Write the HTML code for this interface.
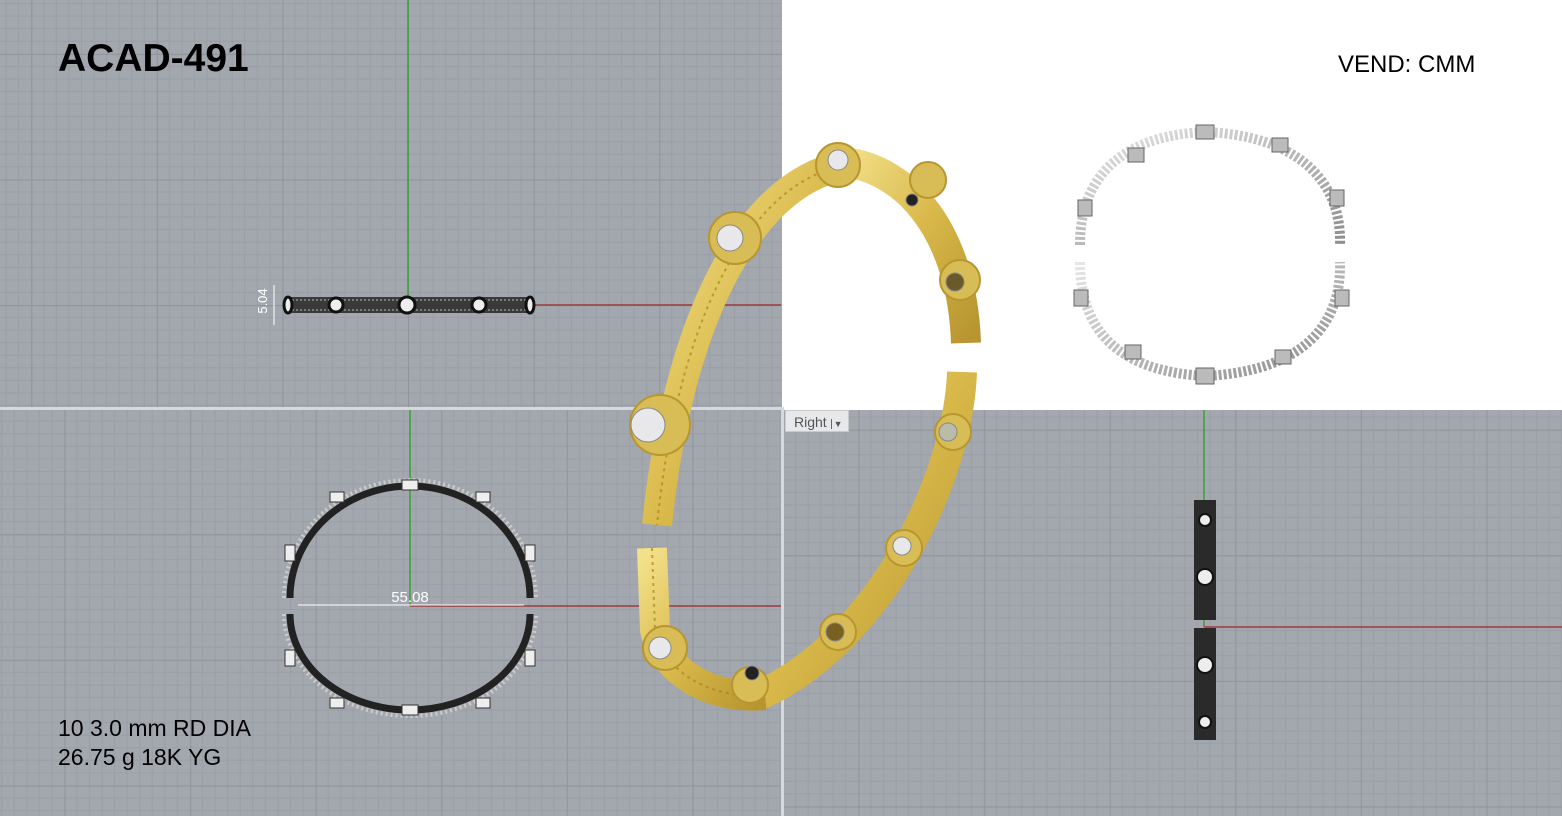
<!DOCTYPE html><html><head><style>
html,body{margin:0;padding:0;width:1562px;height:816px;overflow:hidden;background:#a3a7ae}
svg{position:absolute;left:0;top:0}
.t{position:absolute;font-family:"Liberation Sans",Arial,sans-serif;color:#000}
</style></head><body>
<svg width="1562" height="816" viewBox="0 0 1562 816">
<defs>
<pattern id="g1" x="408" y="305" width="125.6" height="125.6" patternUnits="userSpaceOnUse">
<rect width="125.6" height="125.6" fill="#a3a7ae"/>
<path d="M12.56 0V125.6M25.12 0V125.6M37.68 0V125.6M50.24 0V125.6M62.8 0V125.6M75.36 0V125.6M87.92 0V125.6M100.48 0V125.6M113.04 0V125.6M0 12.56H125.6M0 25.12H125.6M0 37.68H125.6M0 50.24H125.6M0 62.8H125.6M0 75.36H125.6M0 87.92H125.6M0 100.48H125.6M0 113.04H125.6" stroke="#9a9ea6" stroke-width="1"/>
<path d="M0.5 0V125.6M0 0.5H125.6" stroke="#90949c" stroke-width="1.2"/>
</pattern>
<pattern id="g2" x="410" y="606" width="125.6" height="125.6" patternUnits="userSpaceOnUse"><rect width="125.6" height="125.6" fill="url(#g1)"/></pattern>
<pattern id="g3" x="1204" y="627" width="125.6" height="125.6" patternUnits="userSpaceOnUse"><rect width="125.6" height="125.6" fill="url(#g1)"/></pattern>
<linearGradient id="gold" x1="0" y1="0" x2="1" y2="1"><stop offset="0" stop-color="#f3e08a"/><stop offset=".5" stop-color="#d9b94a"/><stop offset="1" stop-color="#b89530"/></linearGradient>
<linearGradient id="silv" x1="0" y1="0" x2="1" y2="1"><stop offset="0" stop-color="#e6e6e6"/><stop offset="1" stop-color="#8d8d8d"/></linearGradient>
</defs>
<rect x="0" y="0" width="782" height="408" fill="url(#g1)"/>
<rect x="0" y="410" width="782" height="406" fill="url(#g2)"/>
<rect x="784" y="410" width="778" height="406" fill="url(#g3)"/>
<rect x="782" y="0" width="780" height="410" fill="#fff"/>
<rect x="0" y="407" width="784" height="3" fill="#d5d8dc"/>
<rect x="781" y="407" width="3" height="409" fill="#d5d8dc"/>
<line x1="408" y1="0" x2="408" y2="305" stroke="#3aa03a" stroke-width="1.5"/>
<line x1="408" y1="305" x2="781" y2="305" stroke="#a03c3c" stroke-width="1.5"/>
<line x1="410" y1="410" x2="410" y2="606" stroke="#3aa03a" stroke-width="1.5"/>
<line x1="410" y1="606" x2="781" y2="606" stroke="#a03c3c" stroke-width="1.5"/>
<line x1="1204" y1="410" x2="1204" y2="627" stroke="#3aa03a" stroke-width="1.5"/>
<line x1="1204" y1="627" x2="1562" y2="627" stroke="#a03c3c" stroke-width="1.5"/>
<rect x="284" y="297" width="250" height="16" rx="6" fill="#3a3a3a"/>
<rect x="288" y="300" width="242" height="10" fill="none" stroke="#bbb" stroke-dasharray="2 2"/>
<g fill="#eee" stroke="#111" stroke-width="3"><circle cx="336" cy="305" r="7"/><circle cx="407" cy="305" r="8"/><circle cx="479" cy="305" r="7"/><ellipse cx="288" cy="305" rx="4" ry="8"/><ellipse cx="530" cy="305" rx="4" ry="8"/></g>
<line x1="274" y1="285" x2="274" y2="325" stroke="#fff"/>
<text x="270" y="306" transform="rotate(-90 266 305)" font-family="Liberation Sans" font-size="13" fill="#fff" text-anchor="middle">5.04</text>
<path d="M290 598 A120 112 0 0 1 530 598" fill="none" stroke="#222" stroke-width="7"/>
<path d="M290 614 A120 96 0 0 0 530 614" fill="none" stroke="#222" stroke-width="7"/>
<path d="M284 598 A126 118 0 0 1 536 598" fill="none" stroke="#ccc" stroke-width="4" stroke-dasharray="2 3"/>
<path d="M284 614 A126 102 0 0 0 536 614" fill="none" stroke="#ccc" stroke-width="4" stroke-dasharray="2 3"/>
<g fill="#eee" stroke="#333"><rect x="402" y="480" width="16" height="10"/><rect x="402" y="705" width="16" height="10"/><rect x="285" y="545" width="10" height="16"/><rect x="525" y="545" width="10" height="16"/><rect x="285" y="650" width="10" height="16"/><rect x="525" y="650" width="10" height="16"/><rect x="330" y="492" width="14" height="10"/><rect x="476" y="492" width="14" height="10"/><rect x="330" y="698" width="14" height="10"/><rect x="476" y="698" width="14" height="10"/></g>
<line x1="298" y1="605" x2="524" y2="605" stroke="#fff"/>
<text x="410" y="602" font-family="Liberation Sans" font-size="15" fill="#fff" text-anchor="middle">55.08</text>
<path d="M1080 245 C1080 170 1130 135 1205 132 C1290 135 1342 175 1340 245" fill="none" stroke="url(#silv)" stroke-width="10" stroke-dasharray="3 2"/>
<path d="M1080 262 C1080 340 1130 372 1205 376 C1290 372 1342 335 1340 262" fill="none" stroke="url(#silv)" stroke-width="10" stroke-dasharray="3 2"/>
<g fill="#bbb" stroke="#666"><rect x="1196" y="125" width="18" height="14"/><rect x="1196" y="368" width="18" height="16"/><rect x="1128" y="148" width="16" height="14"/><rect x="1272" y="138" width="16" height="14"/><rect x="1078" y="200" width="14" height="16"/><rect x="1330" y="190" width="14" height="16"/><rect x="1074" y="290" width="14" height="16"/><rect x="1335" y="290" width="14" height="16"/><rect x="1125" y="345" width="16" height="14"/><rect x="1275" y="350" width="16" height="14"/></g>
<rect x="1194" y="500" width="22" height="120" fill="#2a2a2a"/>
<rect x="1194" y="628" width="22" height="112" fill="#2a2a2a"/>
<g fill="#eee" stroke="#111" stroke-width="2"><circle cx="1205" cy="520" r="6"/><circle cx="1205" cy="577" r="8"/><circle cx="1205" cy="665" r="8"/><circle cx="1205" cy="722" r="6"/></g>
<g fill="none" stroke="url(#gold)" stroke-width="30" stroke-linecap="butt">
<path d="M850 165 C760 175 680 300 657 525"/>
<path d="M840 162 C900 165 962 225 966 343"/>
<path d="M962 372 C958 480 880 640 760 695"/>
<path d="M652 548 L655 630 C665 675 715 700 765 695"/>
</g>
<g fill="none" stroke="#a88620" stroke-width="2" stroke-dasharray="3 4" opacity=".7">
<path d="M850 165 C760 175 680 300 657 525"/><path d="M652 548 L655 630 C665 675 715 700 765 695"/>
</g>
<g fill="#d8bc55" stroke="#b8962f" stroke-width="2">
<circle cx="838" cy="165" r="22"/><circle cx="735" cy="238" r="26"/><circle cx="660" cy="425" r="30"/><circle cx="928" cy="180" r="18"/><circle cx="960" cy="280" r="20"/><circle cx="953" cy="432" r="18"/><circle cx="904" cy="548" r="18"/><circle cx="838" cy="632" r="18"/><circle cx="665" cy="648" r="22"/><circle cx="750" cy="685" r="18"/>
</g>
<g fill="#e8e8ea" stroke="#888"><circle cx="838" cy="160" r="10"/><circle cx="730" cy="238" r="13"/><circle cx="648" cy="425" r="17"/><circle cx="955" cy="282" r="9" fill="#6a5a2a"/><circle cx="948" cy="432" r="9" fill="#bba"/><circle cx="902" cy="546" r="9"/><circle cx="835" cy="632" r="9" fill="#7a6020"/><circle cx="660" cy="648" r="11"/><circle cx="912" cy="200" r="6" fill="#222"/><circle cx="752" cy="673" r="7" fill="#222"/></g>
</svg>
<div style="position:absolute;left:785px;top:410px;width:64px;height:22px;background:#e6e8ea;border:1px solid #c8cacc;font-family:'Liberation Sans',sans-serif;font-size:14px;color:#555;line-height:22px;padding-left:8px;box-sizing:border-box">Right <span style="border-left:1px solid #666;padding-left:2px;font-size:9px">▼</span></div>
<div class="t" style="left:58px;top:37px;font-size:39px;font-weight:bold">ACAD-491</div>
<div class="t" style="left:1338px;top:51px;font-size:24px">VEND: CMM</div>
<div class="t" style="left:58px;top:714px;font-size:23px;line-height:29px">10 3.0 mm RD DIA<br>26.75 g 18K YG</div>
</body></html>
